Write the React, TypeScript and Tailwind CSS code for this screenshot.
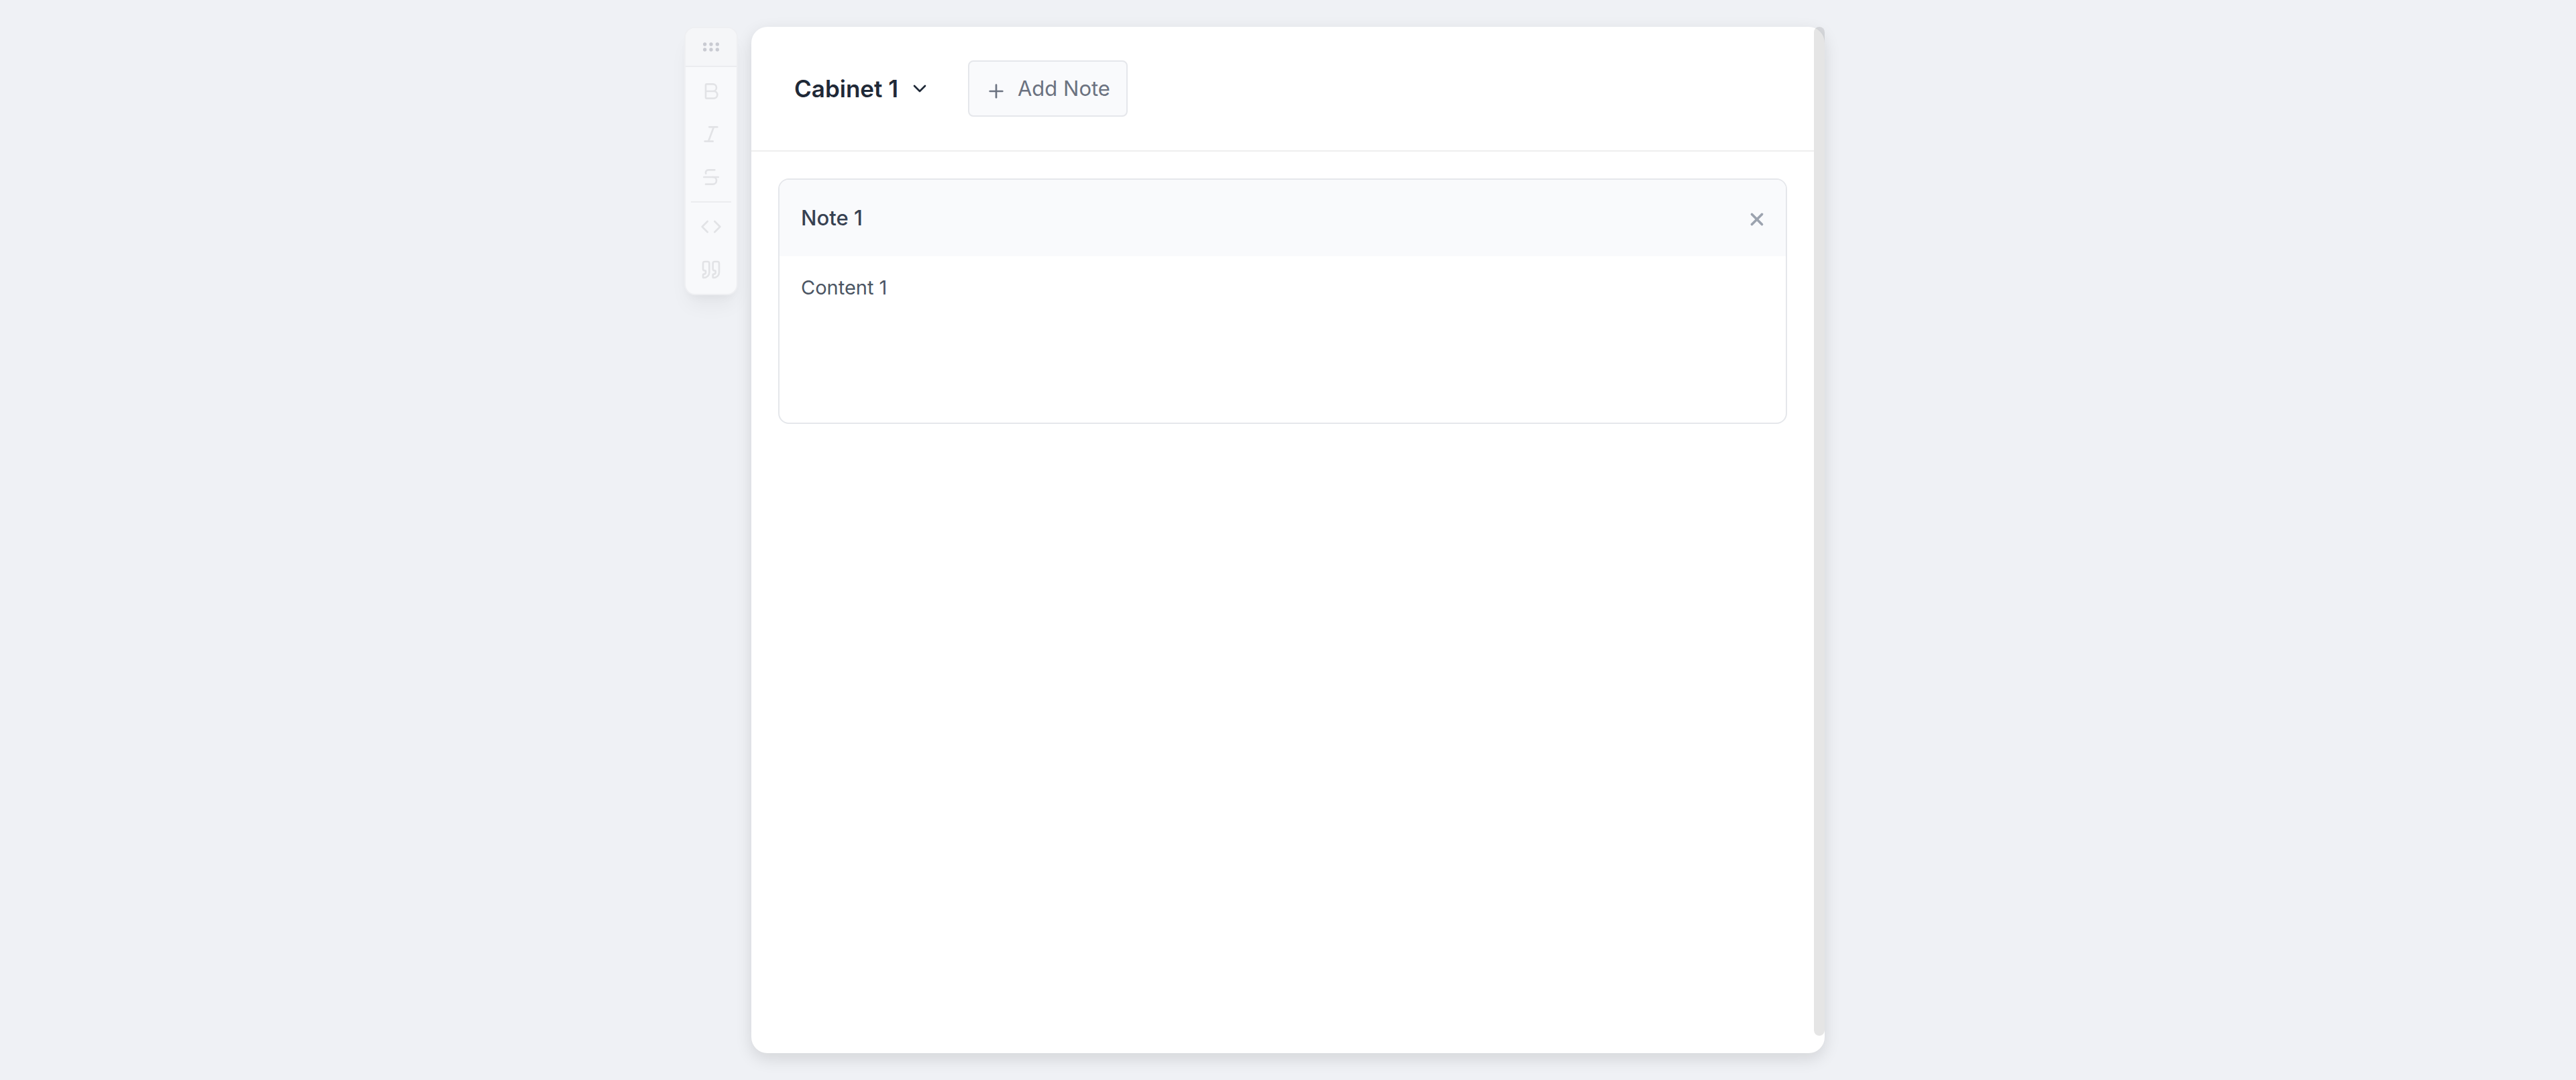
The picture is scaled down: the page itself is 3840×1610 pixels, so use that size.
import type { ReactNode } from "react";
import {
  Bold,
  ChevronDown,
  Code,
  GripHorizontal,
  Italic,
  Plus,
  Quote,
  Strikethrough,
  X,
} from "lucide-react";

function ToolButton({ label, children }: { label: string; children: ReactNode }) {
  return (
    <button
      type="button"
      aria-label={label}
      className="flex size-15 items-center justify-center rounded-lg text-[#e2e3e6]"
    >
      {children}
    </button>
  );
}

function Toolbar() {
  return (
    <div
      role="toolbar"
      aria-label="Formatting"
      className="w-20 overflow-hidden rounded-2xl border-2 border-[#eeeff2] bg-[#f8f9fb] shadow-[0_20px_30px_-6px_rgba(0,0,0,0.05),0_8px_12px_-4px_rgba(0,0,0,0.03)]"
    >
      <button
        type="button"
        aria-label="Move toolbar"
        className="flex h-[58px] w-full items-center justify-center border-b-2 border-[#ebecef] bg-[#f5f6f8] text-[#c9cbd2]"
      >
        <GripHorizontal size={32} />
      </button>
      <div className="flex flex-col items-center gap-1 px-2 pt-1.5 pb-1.5">
        <ToolButton label="Bold">
          <Bold size={32} />
        </ToolButton>
        <ToolButton label="Italic">
          <Italic size={32} />
        </ToolButton>
        <ToolButton label="Strikethrough">
          <Strikethrough size={32} />
        </ToolButton>
        <hr className="my-0.5 w-full border-t-2 border-[#ebecef]" />
        <ToolButton label="Code">
          <Code size={32} />
        </ToolButton>
        <ToolButton label="Quote">
          <Quote size={32} />
        </ToolButton>
      </div>
    </div>
  );
}

function Note({ title, content }: { title: string; content: string }) {
  return (
    <article className="overflow-hidden rounded-2xl border-2 border-[#e5e7eb] bg-white">
      <header className="flex h-[114px] items-center justify-between bg-[#f9fafc] px-8">
        <h2 className="text-[31px] leading-10 font-medium text-[#374151]">{title}</h2>
        <button type="button" aria-label="Delete note" className="-mr-1 pt-1 text-[#9ca3af]">
          <X size={30} strokeWidth={3} />
        </button>
      </header>
      <div className="min-h-[248px] px-8 py-[27px]">
        <p className="text-[29px] leading-10 text-[#4b5563]">{content}</p>
      </div>
    </article>
  );
}

export default function App() {
  return (
    <div className="grid min-h-screen grid-cols-[1fr_minmax(0,1600px)_1fr] bg-[#eff1f5] py-10 font-['Inter',sans-serif]">
      <div className="flex items-start justify-end pr-5">
        <Toolbar />
      </div>
      <main className="relative rounded-3xl bg-white pr-4 shadow-[0_8px_24px_rgba(0,0,0,0.12)]">
        <header className="flex items-center gap-14 border-b-2 border-[#eeeeee] px-16 py-[50px]">
          <button
            type="button"
            className="flex items-center gap-4 text-[35px] leading-10 font-semibold text-[#1f2937]"
          >
            Cabinet 1
            <ChevronDown size={32} />
          </button>
          <button
            type="button"
            className="flex h-[84px] items-center gap-4 rounded-lg border-2 border-[#e5e7eb] bg-[#f9fafc] px-6 text-[31px] leading-10 text-[#6b7280]"
          >
            <Plus size={32} className="mt-2" />
            Add Note
          </button>
        </header>
        <section className="p-10">
          <Note title="Note 1" content="Content 1" />
        </section>
        <div
          aria-hidden="true"
          className="absolute top-0 right-0 bottom-[26px] w-4 rounded-full bg-black/10"
        />
      </main>
      <div />
    </div>
  );
}
